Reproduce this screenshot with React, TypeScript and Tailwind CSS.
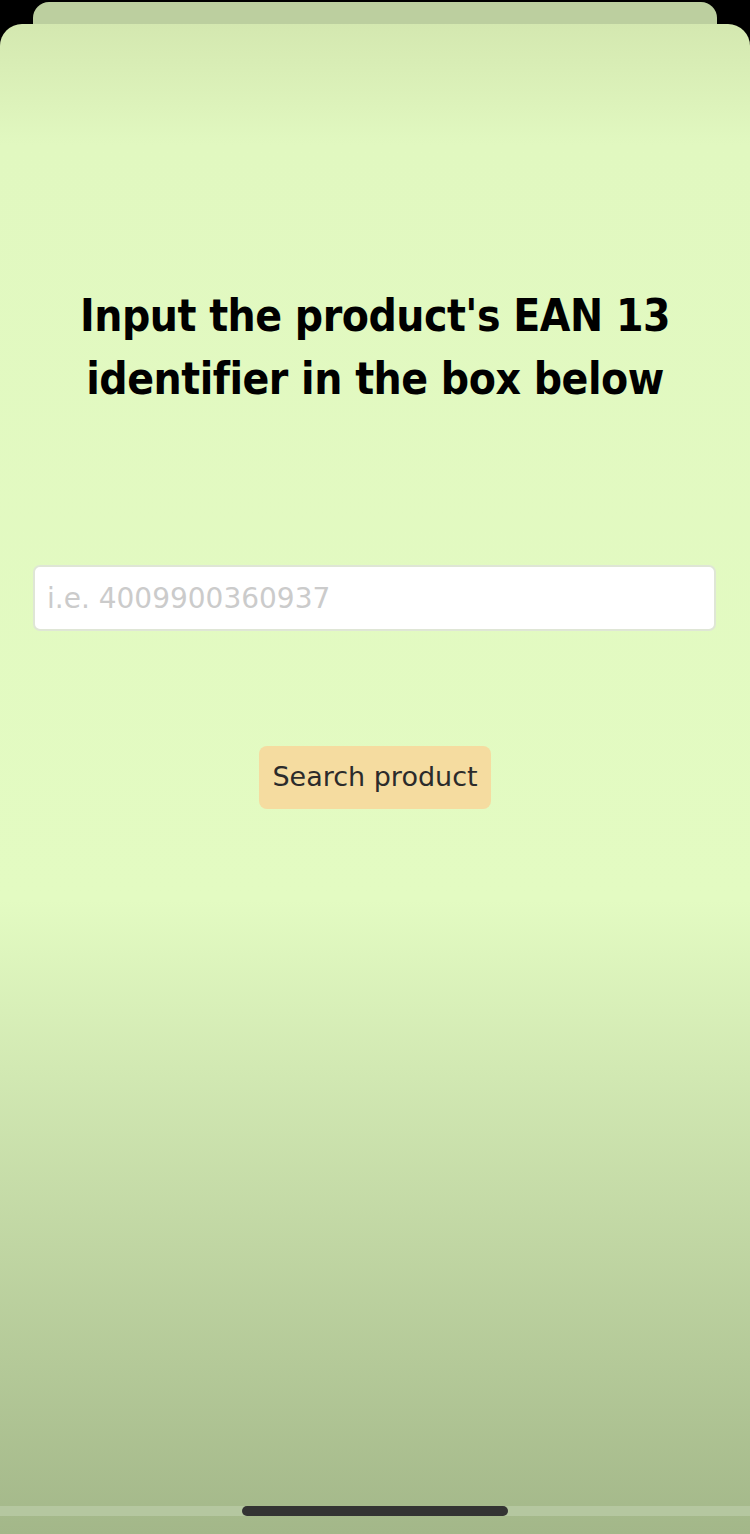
const App = () => {
  return (
    <div className="w-[750px] h-[1534px] bg-black flex flex-col overflow-hidden">
      <div className="mx-[33px] h-[24px] shrink-0 mt-[2px] -mb-[2px] rounded-t-[16px] bg-[#bccf9f]" />
      <main className="flex-1 flex flex-col items-center rounded-t-[22px] bg-[linear-gradient(to_bottom,#d4e8b0_0%,#e1f8c0_8%,#e3fbc2_58%,#a3b789_100%)] [font-family:'DejaVu_Sans',sans-serif]">
        <h1 className="mt-[260px] text-center text-[44px] leading-[63px] font-bold tracking-[-0.5px] text-black [font-family:'DejaVu_Sans_Condensed','DejaVu_Sans',sans-serif] [font-stretch:condensed]">
          Input the product's EAN 13
          <br />
          identifier in the box below
        </h1>
        <input
          className="mt-[155px] w-[683px] h-[66px] self-start ml-[33px] rounded-[7px] bg-white border-2 border-[#dfe6d6] px-[12px] text-[28px] text-[#333] placeholder:text-[#cbcbcb] outline-none"
          placeholder="i.e. 4009900360937"
        />
        <button className="mt-[115px] w-[232px] h-[63px] rounded-[8px] bg-[#f5dca0] text-[27px] text-[#2b2b2b]">
          Search product
        </button>
        <div className="mt-auto w-full h-[10px] mb-[18px] bg-[#b5c7a0] flex justify-center">
          <div className="w-[266px] h-[10px] rounded-full bg-[#333]" />
        </div>
      </main>
    </div>
  );
};

export default App;
